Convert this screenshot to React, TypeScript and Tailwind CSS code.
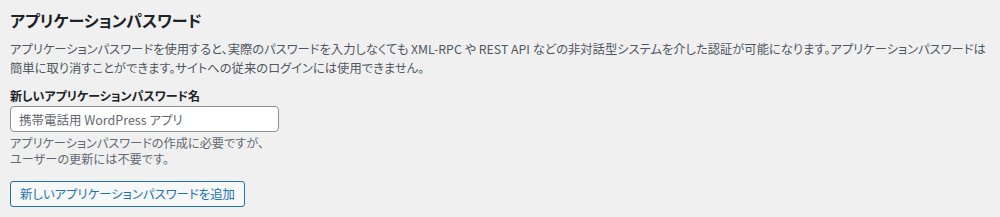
const FONT = "font-['Noto_Sans_CJK_JP','Liberation_Sans',sans-serif] [font-feature-settings:'palt']";

export default function App() {
  return (
    <div className={`min-h-[217px] w-full bg-[#f0f0f1] px-[10px] pt-[8px] text-[12.4px] text-[#3c434a] ${FONT}`}>
      <h2 className="text-[16px] font-semibold leading-[24px] text-[#1d2327]">アプリケーションパスワード</h2>
      <p className="mt-[8px] whitespace-nowrap text-[12.3px] leading-[19px] text-[#50575e]">
        アプリケーションパスワードを使用すると、実際のパスワードを入力しなくても XML-RPC や REST API などの非対話型システムを介した認証が可能になります。アプリケーションパスワードは
        <br />
        簡単に取り消すことができます。サイトへの従来のログインには使用できません。
      </p>
      <div className="mt-[9px] flex flex-col items-start">
        <label className="text-[12px] font-semibold leading-[18px] text-[#1d2327]">新しいアプリケーションパスワード名</label>
        <input
          type="text"
          placeholder="携帯電話用 WordPress アプリ"
          className="mt-[1px] h-[26px] w-[269px] rounded-[4px] border border-[#8c8f94] bg-white px-[8px] text-[12.5px] text-[#2c3338] outline-none placeholder:text-[#646970]"
        />
        <p className="mt-[3px] text-[12.2px] leading-[16px] text-[#646970]">
          アプリケーションパスワードの作成に必要ですが、
          <br />
          ユーザーの更新には不要です。
        </p>
        <button
          type="button"
          className="mt-[14px] h-[26px] rounded-[3px] border border-[#2271b1] bg-[#f6f7f7] px-[9px] leading-[24px] text-[#2271b1]"
        >
          新しいアプリケーションパスワードを追加
        </button>
      </div>
    </div>
  );
}
